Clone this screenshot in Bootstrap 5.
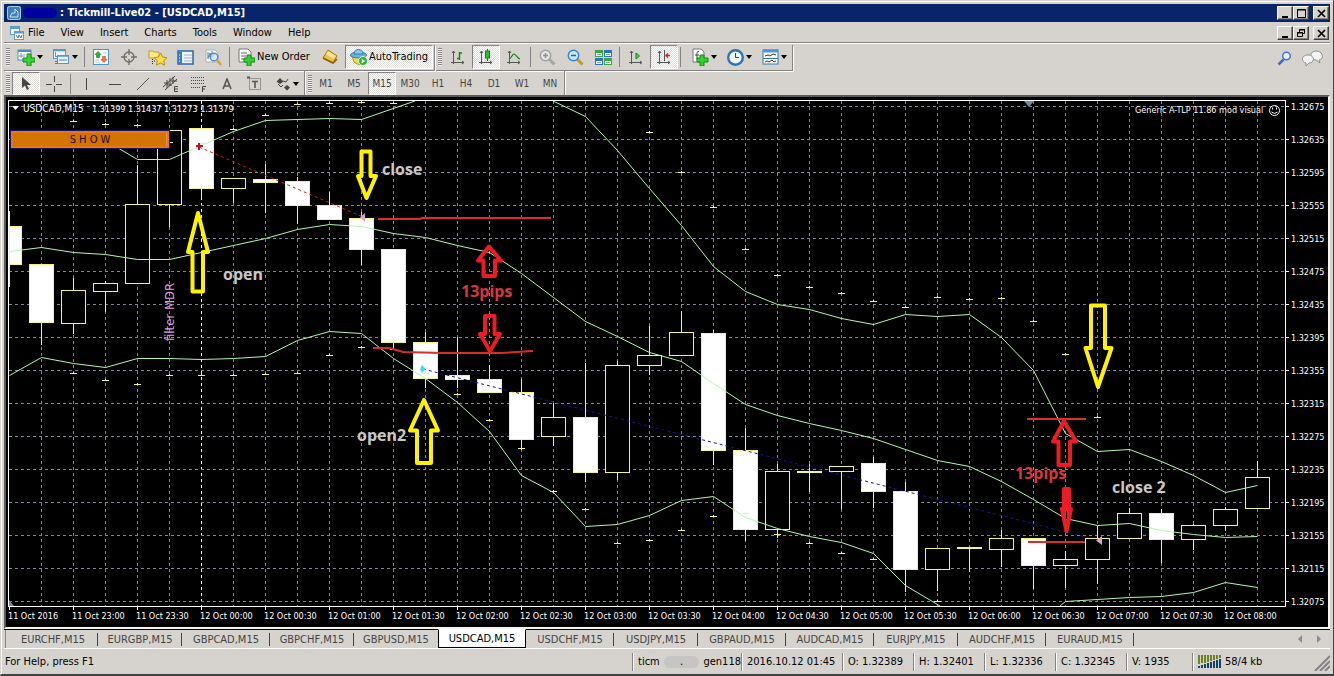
<!DOCTYPE html>
<html lang="en">
<head>
<meta charset="utf-8">
<meta name="viewport" content="width=device-width, initial-scale=1">
<title>Tickmill-Live02 - [USDCAD,M15]</title>
<link href="https://cdn.jsdelivr.net/npm/bootstrap@5.3.0/dist/css/bootstrap.min.css" rel="stylesheet">
<style>
  :root { --face:#d6d3ce; --shade:#848284; --dark:#424142; --navy:#08246b; }
  body { background:var(--face); color:#000; font:11px/14px "DejaVu Sans Condensed","DejaVu Sans",sans-serif; }
  button, a { font:inherit; color:inherit; }
  .app-window { border:1px solid var(--face); border-right-color:var(--dark); border-bottom:2px solid var(--dark); box-shadow:inset 1px 1px #fff; padding:3px 3px 0; overflow:hidden; }
  .title-bar { background:var(--navy); color:#fff; height:18px; font-weight:700; font-size:11px; padding:0 1px 0 3px; }
  .name-blot { width:34px; height:10px; border-radius:5px; background:#0000a0; margin:0 3px 0 2px; }
  .menu-bar { height:20px; padding:2px 1px 0 6px; }
  .menu-bar a { text-decoration:none; margin-right:16px; }
  .win-btn { width:16px; height:14px; padding:0; border:1px solid #fff; border-right-color:var(--dark); border-bottom-color:var(--dark); background:var(--face); box-shadow:inset -1px -1px var(--shade); display:block; line-height:0; }
  .tool-area { border-top:1px solid var(--shade); box-shadow:inset 0 1px #fff; padding-top:2px; }
  .strip { border-right:1px solid var(--shade); border-bottom:1px solid var(--shade); box-shadow:1px 1px #fff; height:26px; margin-right:1px; padding-bottom:1px; }
  .strip-low { height:24px; border-bottom:0; box-shadow:1px 0 #fff; padding:1px 0 0; }
  .grip { width:4px; height:18px; margin:0 2px; background:repeating-linear-gradient(#848284 0 1px,#efefef 1px 2px); }
  .rule { width:1px; height:20px; margin:0 2px; background:var(--shade); }
  .tool { width:28px; height:24px; padding:0; border:1px solid transparent; background:none; display:flex; align-items:center; justify-content:center; color:#444; }
  .strip-low .tool { height:23px; }
  .tool-drop { width:35px; gap:2px; }
  .tool-drop::after { content:""; border:3px solid transparent; border-top:4px solid #000; border-bottom:0; }
  .tool-text { width:84px; color:#000; gap:2px; }
  .tool-auto { width:88px; margin:0 1px; color:#000; gap:1px; }
  .pressed { border-color:var(--shade) #fff #fff var(--shade); background:repeating-conic-gradient(#fff 0 25%,#dfddd9 0 50%) 0 0/2px 2px; }
  .frames { font-size:10px; }
  .chart-box { background:#000; border:2px solid #5a5a5a; border-right-color:#f4f4f2; border-bottom-color:#f4f4f2; position:relative; }
  .chart-box svg { display:block; width:100%; height:auto; }
  .chart-box text { font-family:"DejaVu Sans Condensed","DejaVu Sans",sans-serif; font-size:9px; fill:#fff; }
  .chart-box .note { font-family:"Open Sans",sans-serif; font-weight:700; font-size:16px; fill:#c8c8c8; }
  .chart-box .note-red { fill:#d8383c; }
  .chart-box .symbol-label { font-size:10px; }
  .chart-box .filter-label { font-size:13px; fill:#dda0dd; }
  .show-btn { position:absolute; left:4px; top:33px; width:160px; height:19px; padding:0; background:#d37300; border:1px solid #20106b; box-shadow:inset 0 0 0 2px #e07b10, inset -3px 0 #e2924a; color:#200830; font-size:11px; line-height:12px; }
  .tab-bar { height:20px; border-top:1px solid #000; border-bottom:1px solid #fff; padding-left:1px; color:#444; }
  .tab-bar .nav-link { width:88px; height:18px; padding:1px 0 0; color:inherit; text-align:center; position:relative; border:0; border-radius:0; background:none; }
  .tab-bar .short { width:84px; }
  .tab-bar .first { width:93px; padding-left:2px; border-left:1px solid var(--shade); }
  .tab-bar .nav-link::after { content:""; position:absolute; right:0; top:3px; height:13px; border-right:1px solid var(--dark); }
  .tab-bar .active { background:#fff; color:#000; border:1px solid #000; border-top-color:#fff; margin-top:-1px; height:19px; }
  .tab-bar .active::after, .tab-bar .before-active::after { display:none; }
  .status-bar { height:25px; padding-left:1px; }
  .status-bar .cell { border-left:1px solid var(--shade); box-shadow:inset 1px 0 #fff; padding-left:5px; height:18px; line-height:18px; white-space:nowrap; flex:none; }
  .c-login { width:109px; } .c-date { width:101px; } .c-val { width:71px; } .c-vol { width:66px; } .c-net { width:138px; }
  .ip-blot { width:40px; height:12px; border-radius:6px; background:#c6c5c3; line-height:12px; text-align:center; }
</style>
</head>
<body>
<div class="app-window">
  <header class="title-bar d-flex align-items-center">
    <svg width="14" height="14" viewBox="0 0 14 14"><rect width="14" height="14" rx="2" fill="#3f7fb5"/><rect x=".5" y=".5" width="13" height="13" rx="2" fill="none" stroke="#a9cbe6"/><path d="M3 11h8V6L8 3v4H5l-2 4" fill="none" stroke="#cfe3f3"/></svg>
    <span class="name-blot"></span>
    <span>: Tickmill-Live02 - [USDCAD,M15]</span>
    <div class="d-flex ms-auto">
      <button class="win-btn" aria-label="Minimize"><svg width="13" height="11"><path d="M3 9h6" stroke="#000" stroke-width="2"/></svg></button>
      <button class="win-btn" aria-label="Maximize"><svg width="13" height="11"><path d="M2.500 1.500h8v8h-8zM2 2h9" stroke="#000" fill="none"/></svg></button>
      <button class="win-btn ms-1" aria-label="Close"><svg width="13" height="11"><path d="M3 2l7 7M10 2l-7 7" stroke="#000" stroke-width="1.700"/></svg></button>
    </div>
  </header>
  <nav class="menu-bar d-flex align-items-center">
    <svg class="me-1" width="14" height="14" viewBox="0 0 14 14" fill="#fff" stroke="#5a9bd0"><rect x=".5" y=".5" width="9" height="8"/><path d="M.5 2h9" stroke-width="2"/><rect x="4.500" y="5.500" width="9" height="8"/><path d="M4.500 6.500h9" stroke-width="2"/><path d="M6 9l2 3 1-3 2 3 1-3" fill="none" stroke="#3877ad"/></svg>
    <a href="#">File</a><a href="#">View</a><a href="#">Insert</a><a href="#">Charts</a><a href="#">Tools</a><a href="#">Window</a><a href="#">Help</a>
    <div class="d-flex ms-auto">
      <button class="win-btn" aria-label="Minimize chart"><svg width="13" height="11"><path d="M3 9h6" stroke="#000" stroke-width="2"/></svg></button>
      <button class="win-btn" aria-label="Restore chart"><svg width="13" height="11" fill="none" stroke="#000"><path d="M4.500 4V1.500h5v4H8M4 2h6M2.500 4.500h5v4h-5zM2 5h6"/></svg></button>
      <button class="win-btn ms-1" aria-label="Close chart"><svg width="13" height="11"><path d="M3 2l7 7M10 2l-7 7" stroke="#000" stroke-width="1.700"/></svg></button>
    </div>
  </nav>

  <div class="tool-area">
    <div class="d-flex">
      <div class="strip d-flex align-items-center">
        <span class="grip"></span>
        <button class="tool tool-drop" aria-label="New chart"><svg width="18" height="18" viewBox="0 0 18 18"><rect x="1" y="2" width="13" height="10" fill="#fff" stroke="#4d8cc0"/><path d="M1 3h13" stroke="#4d8cc0" stroke-width="2"/><path d="M4 5v5M2 8h4M7 6v3" stroke="#88a"/><path d="M10 6h4v4h4v4h-4v4h-4v-4H6v-4h4z" fill="#35d435" stroke="#118a11"/></svg></button>
        <button class="tool tool-drop" aria-label="Profiles"><svg width="18" height="18" viewBox="0 0 18 18" fill="#eaf4fc" stroke="#5b96c6"><rect x="1.500" y="1.500" width="12" height="9"/><path d="M1 2.500h13" stroke-width="1.500"/><path d="M3.500 4v5M3 8.500h8"/><rect x="5.500" y="7.500" width="11" height="8"/><path d="M5 8h12" stroke-width="1.500"/><path d="M3 13.500h3M3 15.500h3M7 12h8" stroke="#4484ba"/></svg></button>
        <span class="rule"></span>
        <button class="tool" aria-label="Market Watch"><svg width="16" height="16" viewBox="0 0 16 16"><rect x=".5" y=".5" width="15" height="15" fill="#f6fbff" stroke="#4f93c4"/><path d="M5 2.500l3 3H6.500v3h-3v-3H2z" fill="#2fae2f" stroke="#17801a" stroke-width=".6"/><path d="M11 13.500l-3-3h1.500v-3h3v3H14z" fill="#ef7a4a" stroke="#c03c18" stroke-width=".6"/><path d="M10 4h4M2 11h4M2 13h4" stroke="#c2cdd6"/></svg></button>
        <button class="tool" aria-label="Data Window"><svg width="16" height="16" viewBox="0 0 16 16" fill="none" stroke="#6c6c6c" stroke-width="1.300"><circle cx="8" cy="8" r="5"/><path d="M8 0v6M8 10v6M0 8h6M10 8h6"/></svg></button>
        <button class="tool" aria-label="Navigator"><svg width="19" height="18" viewBox="0 0 19 18"><path d="M1 3h4l1 1h5v6H1z" fill="#fce98a" stroke="#c99b16"/><path d="M4.500 11v6M6 13h2" stroke="#333" stroke-dasharray="1 1"/><path d="M12.500 5l2 4 4.500.7-3.200 3 .8 4.500-4.100-2.200-4 2.200.8-4.500L6 9.700l4.500-.7z" fill="#fbdc45" stroke="#bd8b10"/></svg></button>
        <button class="tool" aria-label="Terminal"><svg width="17" height="15" viewBox="0 0 17 15"><rect x="1" y="1" width="15" height="13" fill="#eef7ff" stroke="#2a66a8" stroke-width="1.500"/><path d="M1 2h4v12H1z" fill="#3d7cc0"/><path d="M7 5h8M7 8h8M7 11h8" stroke="#9cb4c8"/><path d="M2 5h1M2 8h1M2 11h1" stroke="#fff"/></svg></button>
        <button class="tool" aria-label="Strategy Tester"><svg width="17" height="17" viewBox="0 0 17 17"><path d="M1 1h9l3 3v9H1z" fill="#f6f9fc" stroke="#a7b3be"/><path d="M3 10V3M5 8V4M7 9V2M3 9l2-5 2 5 2-4" stroke="#5a84a8" fill="none"/><circle cx="9" cy="8" r="3.800" fill="#cfe6f8cc" stroke="#4d8cc8" stroke-width="1.400"/><path d="M12 11l4 5" stroke="#d7a42c" stroke-width="2.500"/></svg></button>
        <span class="rule"></span>
        <button class="tool tool-text"><svg width="17" height="18" viewBox="0 0 17 18"><path d="M1 1h9l3 3v10H1z" fill="#fcfcfc" stroke="#777"/><path d="M3 5h6M3 8h5M3 11h4" stroke="#666" stroke-width="1.200"/><path d="M9 7h4v3h4v4h-4v4H9v-4H6v-4h3z" fill="#32cf32" stroke="#118a11"/></svg>New Order</button>
        <button class="tool" aria-label="MetaEditor"><svg width="17" height="16" viewBox="0 0 17 16"><path d="M6 1l9 6-4 7-10-5z" fill="#f2c140" stroke="#a8720c"/><path d="M6 2l8 5-3 3-7-5z" fill="#fde58a"/><path d="M1 9l10 5 4-4" fill="none" stroke="#8a5a08" stroke-width="1.500"/></svg></button>
        <button class="tool tool-auto pressed"><svg width="18" height="18" viewBox="0 0 18 18"><path d="M2 8h13l-1 6-5 3-5-3z" fill="#f5d84a" stroke="#c19a17"/><ellipse cx="8.500" cy="7" rx="8" ry="3" fill="#69b4df" stroke="#2d7fae"/><path d="M4 6c0-6 9-6 9 0z" fill="#8ccbee" stroke="#2d7fae"/><circle cx="13" cy="13" r="4.500" fill="#29b32c" stroke="#fff" stroke-width=".8"/><path d="M11.700 10.500l3.500 2.500-3.500 2.500z" fill="#fff"/></svg>AutoTrading</button>
      </div>
      <div class="strip d-flex align-items-center">
        <span class="grip"></span>
        <button class="tool" aria-label="Bar chart"><svg width="16" height="16" viewBox="0 0 16 16" fill="none" stroke="#555"><path d="M3.500 2v13M1 13.500h13M2 4l1.500-2L5 4M12 12l2 1.500-2 1.500"/><path d="M9.500 3v8M9.500 4H12M7 9.500h2.500" stroke="#0a8a0a" stroke-width="1.500"/></svg></button>
        <button class="tool pressed" aria-label="Candlesticks"><svg width="16" height="16" viewBox="0 0 16 16" fill="none" stroke="#555"><path d="M3.500 2v13M1 13.500h13M2 4l1.500-2L5 4M12 12l2 1.500-2 1.500"/><path d="M9.500 0v12" stroke="#0a8a0a"/><rect x="7.500" y="2" width="4" height="7" fill="#22c322" stroke="#0a8a0a"/></svg></button>
        <button class="tool" aria-label="Line chart"><svg width="16" height="16" viewBox="0 0 16 16" fill="none" stroke="#555"><path d="M3.500 2v13M1 13.500h13M2 4l1.500-2L5 4M12 12l2 1.500-2 1.500"/><path d="M3 10c3-1 3-5 5-5s3 4 6 5" stroke="#0a8a0a" stroke-width="1.200"/></svg></button>
        <span class="rule"></span>
        <button class="tool" aria-label="Zoom In"><svg width="17" height="17" viewBox="0 0 17 17"><path d="M10.500 10.500l5 5" stroke="#a5a5a5" stroke-width="3"/><circle cx="6.500" cy="6.500" r="5.200" fill="#e6e6e6" stroke="#a0a0a0" stroke-width="1.500"/><path d="M4 6.500h5M6.500 4v5" stroke="#8f8f8f" stroke-width="1.500"/></svg></button>
        <button class="tool" aria-label="Zoom Out"><svg width="17" height="17" viewBox="0 0 17 17"><path d="M10.500 10.500l5 5" stroke="#c9962a" stroke-width="3"/><circle cx="6.500" cy="6.500" r="5.200" fill="#c8e6fa" stroke="#3b87c4" stroke-width="1.500"/><path d="M4 6.500h5" stroke="#22659d" stroke-width="1.500"/></svg></button>
        <button class="tool" aria-label="Tile Windows"><svg width="17" height="17" viewBox="0 0 17 17"><path d="M0 1h8v7H0zM9 9h8v7H9z" fill="#3fa535"/><path d="M9 1h8v7H9zM0 9h8v7H0z" fill="#2f6fc4"/><path d="M1 4h6v3H1zM10 4h6v3h-6zM1 12h6v3H1zM10 12h6v3h-6z" fill="#eaf5ea"/><path d="M2 5.500h4M11 5.500h4M2 13.500h4M11 13.500h4" stroke="#8ab"/></svg></button>
        <span class="rule"></span>
        <button class="tool" aria-label="Auto Scroll"><svg width="16" height="16" viewBox="0 0 16 16" fill="none" stroke="#555"><path d="M3.500 2v13M1 13.500h13M2 4l1.500-2L5 4M12 12l2 1.500-2 1.500"/><path d="M8 4l3.500 3L8 10z" fill="#5fd35f" stroke="#0a8a0a"/></svg></button>
        <button class="tool pressed" aria-label="Chart Shift"><svg width="16" height="16" viewBox="0 0 16 16" fill="none" stroke="#555"><path d="M3.500 2v13M1 13.500h13M2 4l1.500-2L5 4M12 12l2 1.500-2 1.500M8.500 1v11"/><path d="M14 6.500H9.500M12 4.500l-2 2 2 2" stroke="#b03020" stroke-width="1.300"/></svg></button>
        <span class="rule"></span>
        <button class="tool tool-drop ms-1" aria-label="Indicators"><svg width="17" height="18" viewBox="0 0 17 18"><path d="M1 1h8l3 3v10H1z" fill="#fcfcfc" stroke="#777"/><path d="M7 3.500c-2-.5-2 1-2 3v5M3 7h4" fill="none" stroke="#444"/><path d="M8 7h4v3h4v4h-4v4H8v-4H5v-4h3z" fill="#32cf32" stroke="#118a11"/></svg></button>
        <button class="tool tool-drop" aria-label="Periods"><svg width="17" height="17" viewBox="0 0 17 17"><circle cx="8.500" cy="8.500" r="7.300" fill="#f0f8ff" stroke="#2b74ba" stroke-width="2.400"/><path d="M8.500 4v4.500H12" fill="none" stroke="#345"/></svg></button>
        <button class="tool tool-drop" aria-label="Templates"><svg width="17" height="17" viewBox="0 0 17 17"><rect x="1" y="1" width="15" height="14" fill="#fff" stroke="#2f74b3"/><path d="M1 2h15" stroke="#4f97d2" stroke-width="3"/><path d="M1 9.500h15" stroke="#2f74b3"/><path d="M3 7l3-1 2 1 3-2 3 1M3 13l2-1 2 1 3-2 2 2 2-1" fill="none" stroke="#333"/></svg></button>
      </div>
      <div class="d-flex align-items-center ms-auto">
        <button class="tool" aria-label="Search"><svg width="15" height="15" viewBox="0 0 15 15" fill="none"><path d="M1.500 13.500l5-5" stroke="#4468c8" stroke-width="2.500"/><circle cx="9.500" cy="5" r="3.800" fill="#e6eefb" stroke="#4a6fd0" stroke-width="1.500"/></svg></button>
        <button class="tool me-1" aria-label="Chat"><svg width="21" height="16" viewBox="0 0 21 16" fill="#f3f3f3" stroke="#8f8f8f"><path d="M14 1c8 0 8 9 3 9l1 3-4-3c-7 0-7-9 0-9z"/><path d="M6 5c7 0 7 8 1 8l-3 3v-3c-5-1-5-8 2-8z"/></svg></button>
      </div>
    </div>
    <div class="d-flex">
      <div class="strip strip-low d-flex align-items-center">
        <span class="grip"></span>
        <button class="tool pressed" aria-label="Cursor"><svg width="12" height="16" viewBox="0 0 12 16"><path d="M2 1v11l3-2.500L7 14l2-1-2-4h4z" fill="#444"/></svg></button>
        <button class="tool" aria-label="Crosshair"><svg width="16" height="16" stroke="#444"><path d="M8.500 0v6M8.500 10v6M0 8.500h6M10 8.500h6"/></svg></button>
        <span class="rule"></span>
        <button class="tool" aria-label="Vertical Line"><svg width="14" height="14" stroke="#444"><path d="M6.500 1v12"/></svg></button>
        <button class="tool" aria-label="Horizontal Line"><svg width="14" height="14" stroke="#444"><path d="M1 7.500h12"/></svg></button>
        <button class="tool" aria-label="Trendline"><svg width="14" height="14" stroke="#555"><path d="M1 13L13 1"/></svg></button>
        <button class="tool" aria-label="Equidistant Channel"><svg width="18" height="18" stroke="#444" fill="none"><path d="M1 12L13 1M3 15L15 4M2 8l5 0M5 5l0 8M8 3v8M11 2v7M5 10h5M9 6h6"/><path d="M16 11.500h-3.500v5H16M12.500 14H16"/></svg></button>
        <button class="tool" aria-label="Fibonacci"><svg width="18" height="18" stroke="#444" fill="none"><path d="M1 2.500h14M1 5.500h14M1 8.500h14M1 12.500h9" stroke-dasharray="1 1"/><path d="M16 11.500h-3.500V17M12.500 14H15"/></svg></button>
        <button class="tool" aria-label="Text"><svg width="12" height="12" fill="none" stroke="#555" stroke-width="1.600"><path d="M2 11L6 1l4 10M3.500 8h5"/></svg></button>
        <button class="tool" aria-label="Text Label"><svg width="16" height="16" fill="none" stroke="#555"><rect x="2.500" y="2.500" width="11" height="11" stroke-dasharray="1 1"/><path d="M5 5.500h6M8 5v7" stroke-width="1.600"/><path d="M0 1.500h3" stroke-width="2"/></svg></button>
        <button class="tool tool-drop" aria-label="Arrows"><svg width="16" height="16" fill="#444"><path d="M5 2l3.500 3.500L5 8 1.500 5.500zM12 9l3 2.500-3 3-3-3z"/><path d="M3 8l3 3 2-2M8 5l3 1 2-3" fill="none" stroke="#444"/></svg></button>
      </div>
      <div class="strip strip-low frames d-flex align-items-center">
        <span class="grip me-0"></span>
        <button class="tool">M1</button><button class="tool">M5</button><button class="tool pressed">M15</button><button class="tool">M30</button><button class="tool">H1</button><button class="tool">H4</button><button class="tool">D1</button><button class="tool">W1</button><button class="tool">MN</button>
      </div>
    </div>
  </div>

  <main class="chart-box">
    <svg id="chart" viewBox="6 97 1322 530" role="img" aria-label="USDCAD M15 candlestick chart">
      <g id="grid" stroke="#7c8799" stroke-dasharray="3 3" shape-rendering="crispEdges"></g>
      <g id="axes" stroke="#fff" shape-rendering="crispEdges"><path d="M8.500 606V100.500H1285.500V606.500H8" fill="none"/></g>
      <g id="candles" stroke="#f5f57a" shape-rendering="crispEdges"></g>
      <g id="marks" stroke="#f5f57a" shape-rendering="crispEdges"></g>
      <g id="bands" fill="none" stroke="#b4f5b4"></g>
      <g id="labels"></g>
      <path d="M199 147L363 217" stroke="#d81818" stroke-dasharray="3 3"/>
      <path d="M423 369L1090 538" stroke="#1414a0" stroke-dasharray="3 3"/>
      <path d="M196 146h7M199 143v7" stroke="#d01010" stroke-width="2"/>
      <path d="M422 365l4 4-4 4-2-4z" fill="#40e0f0"/>
      <path d="M365 213v9l-5-4.500zM1102 536v9l-6-4.500z" fill="#dda0dd"/>
      <path d="M1024 101h10l-5 6zM9 600v6h5z" fill="#778899"/>
      <g fill="none" stroke="#dc2c30" stroke-width="2"><path d="M378 219h42l2-1h129M373 348h16l14 4 40 1h57l33-2M1027 419h59M1028 542h57"/></g>
      <g fill="none" stroke="#fff200" stroke-width="4" stroke-linejoin="round">
        <path d="M198 213l10 39h-5v39.500h-10.500V252H188z"/>
        <path d="M361.500 151.500h9V176h5.500l-9.500 22-8.500-22h3.500z"/>
        <path d="M424 400l14 30.500h-7V463h-14v-32.500h-7z"/>
        <path d="M1091 305.500h14V348h6.500L1098 387l-12.500-39h5.500z"/>
      </g>
      <g fill="none" stroke="#ed1c24" stroke-width="4" stroke-linejoin="round">
        <path d="M489 246.500l12 14h-6V276h-11.500v-15.500H478z"/>
        <path d="M485 316h9.500v18h5.500l-10 17-10-17h5z"/>
        <path d="M1064 421l12 20.500h-6V465h-11.500v-23.500H1053z"/>
        <path d="M1064 489h5v20h2l-4.500 22-4.500-22h2z" fill="#ed1c24"/>
      </g>
      <path d="M1066.500 511v8" stroke="#000"/>
      <path d="M12 106h7l-3.500 4z" fill="#fff"/>
      <text x="23" y="112" class="symbol-label">USDCAD,M15</text>
      <text x="92" y="112">1.31399 1.31437 1.31273 1.31379</text>
      <text x="1135" y="113">Generic A-TLP 11.86 mod visual</text>
      <circle cx="1274.500" cy="110.500" r="5" fill="none" stroke="#fff"/><path d="M1272.500 107.500v2M1276.500 107.500v2M1271.500 112q3 3 6 0" stroke="#fff" fill="none"/>
      <text x="174" y="341" class="filter-label" transform="rotate(-90 174 341)">filter MDR</text>
      <text class="note" x="382" y="175">close</text><text class="note" x="223" y="280">open</text>
      <text class="note" x="357" y="441">open2</text><text class="note" x="1112" y="493">close 2</text>
      <text class="note note-red" x="461" y="297">13pips</text><text class="note note-red" x="1015" y="479">13pips</text>
    </svg>
    <button class="show-btn">S H O W</button>
  </main>

  <nav class="tab-bar nav flex-nowrap">
    <button class="nav-link first">EURCHF,M15</button><button class="nav-link short">EURGBP,M15</button><button class="nav-link">GBPCAD,M15</button><button class="nav-link short">GBPCHF,M15</button><button class="nav-link short before-active">GBPUSD,M15</button><button class="nav-link active">USDCAD,M15</button><button class="nav-link">USDCHF,M15</button><button class="nav-link short">USDJPY,M15</button><button class="nav-link">GBPAUD,M15</button><button class="nav-link">AUDCAD,M15</button><button class="nav-link short">EURJPY,M15</button><button class="nav-link">AUDCHF,M15</button><button class="nav-link">EURAUD,M15</button>
    <svg class="ms-auto me-2 align-self-center" width="24" height="8" fill="#8c8c8c"><path d="M4 0v8L0 4zM19 0v8l4-4z"/></svg>
  </nav>
  <footer class="status-bar d-flex align-items-center">
    <span class="me-auto">For Help, press F1</span>
    <div class="cell c-login d-flex align-items-center">ticm<span class="ip-blot ms-1 me-1">.</span>gen118</div>
    <div class="cell c-date">2016.10.12 01:45</div>
    <div class="cell c-val">O: 1.32389</div><div class="cell c-val">H: 1.32401</div><div class="cell c-val">L: 1.32336</div><div class="cell c-val">C: 1.32345</div><div class="cell c-vol">V: 1935</div>
    <div class="cell c-net d-flex align-items-center">
      <svg class="me-1" width="23" height="13" viewBox="0 0 23 13"><path d="M1 0v9M4 0v8M7 0v8M10 0v7M13 0v6M16 0v5M19 0v4M22 0v3" stroke="#6f8420" stroke-width="2"/><path d="M1 11v2M4 10v3M7 9v4M10 8v5M13 7v6M16 6v7M19 5v8M22 4v9" stroke="#10456b" stroke-width="2"/></svg>58/4 kb
      <svg class="ms-auto align-self-end" width="16" height="16" stroke="#848284" stroke-width="2"><path d="M1 16L16 1M6 16L16 6M11 16l5-5"/></svg>
    </div>
  </footer>
</div>
<script src="https://cdn.jsdelivr.net/npm/bootstrap@5.3.0/dist/js/bootstrap.bundle.min.js"></script>
<script>
  const html = {grid:'', axes:'', candles:'', marks:'', bands:'', labels:''};
  const line = (x1, y1, x2, y2, extra = '') => `<path d="M${x1} ${y1}L${x2} ${y2}" ${extra}/>`;

  // Grid, price scale and time scale
  for (let x = 41; x <= 1257; x += 32) html.grid += line(x + .5, 101, x + .5, 606, x === 201 ? 'stroke="#fff"' : '');
  for (let i = 0; i < 16; i++) {
    const y = 106 + 33 * i;
    html.grid += line(9, y + .5, 1285, y + .5);
    html.axes += line(1286, y + .5, 1289, y + .5);
    html.labels += `<text x="1291" y="${y + 4}">${(1.32675 - i * 0.0004).toFixed(5)}</text>`;
  }
  for (let i = 0; i < 20; i++) {
    const x = 9 + 64 * i, half = (i + 45) % 48;
    const clock = String(Math.floor(half / 2)).padStart(2, '0') + (half % 2 ? ':30' : ':00');
    html.axes += line(x + .5, 607, x + .5, 610);
    html.labels += `<text x="${x - 1}" y="619">${i ? (i < 3 ? '11' : '12') + ' Oct ' + clock : '11 Oct 2016'}</text>`;
  }

  // Candles, one per 15 minutes: high, body top, body bottom, low, falling
  const bars = [[211,226,264,286,1],[264,264,322,344,1],[278,290,323,333,0],[281,283,291,311,0],[165,204,283,283,0],[130,130,204,226,0],
    [128,128,188,198,1],[178,178,188,202,0],[164,179,182,212,1],[177,181,205,223,1],[192,205,219,219,1],[212,218,249,264,1],[249,249,342,348,1],
    [332,342,378,387,1],[337,375,379,387,1],[365,379,392,392,1],[379,392,439,449,1],[403,417,436,445,0],[363,417,472,481,1],[361,365,472,479,0],
    [326,355,365,374,0],[311,332,355,355,0],[330,333,450,464,1],[428,450,529,540,1],[464,471,529,537,0],[464,471,472,491,1],[466,466,471,508,0],
    [457,463,491,507,1],[482,491,569,591,1],[548,548,569,590,0],[547,547,548,571,1],[530,538,549,566,0],[538,538,565,588,1],[551,559,565,587,0],
    [526,538,559,583,0],[508,513,538,538,0],[509,513,539,562,1],[524,525,539,549,0],[507,509,525,530,0],[461,477,508,508,0]];
  bars.forEach(([hi, top, bot, lo, down], i) => {
    const x = 9 + 32 * i, left = Math.max(x - 12, 9);
    html.candles += line(x + .5, hi, x + .5, lo + 1) +
      `<rect x="${left + .5}" y="${top + .5}" width="${x + 12 - left}" height="${bot - top}" fill="${down ? '#fff' : '#000'}"/>`;
  });

  // Indicator dashes above and below the price, starting at the third bar
  const upper = [121,124,125,142,143,129,115,104,103,102,103,0,0,0,0,0,0,0,132,172,207,249,275,287,293,301,307,297,299,298,321,354,417];
  const lower = [373,380,384,375,375,375,374,373,355,347,349,373,394,420,448,491,509,543,540,530,516,513,534,543,553,559,0,601];
  [upper, lower].forEach(set => set.forEach((y, i) => {
    const x = 73 + 32 * i;
    if (y) html.marks += line(x - 3, y + .5, x + 4, y + .5) + line(x + .5, y - 1, x + .5, y + 1);
  }));

  // Moving bands
  const band = (x0, ys) => ys.map((y, i) => `${x0 + 32 * i + .5},${y + .5}`).join(' ');
  [
    '113,145 ' + band(137, [159,159,145,131,120,119,118,119]) + ' 415,101',
    '553,101 ' + band(585, [116,150,188,225,266,291,304,309,318,324,314,316,314,337,370,433,451,449,461,475,492,485]),
    band(9, [251,247,252,254,259,259,252,245,238,229,224,226,233,237,245,252,273,297,321,336,352,361,383,404,415,423,430,438,449,460,466,481,499,518,525,523,530,534,537,536]),
    band(9, [375,357,363,367,358,358,359,358,356,340,331,333,358,378,402,431,475,492,526,524,515,500,496,517,528,536,542,553,585]) + ' 940,606',
    '1060,606 ' + band(1065, [601,599,597,596,592,582,587])
  ].forEach(p => html.bands += `<polyline points="${p}"/>`);

  for (const id in html) document.getElementById(id).innerHTML += html[id];
</script>
</body>
</html>
